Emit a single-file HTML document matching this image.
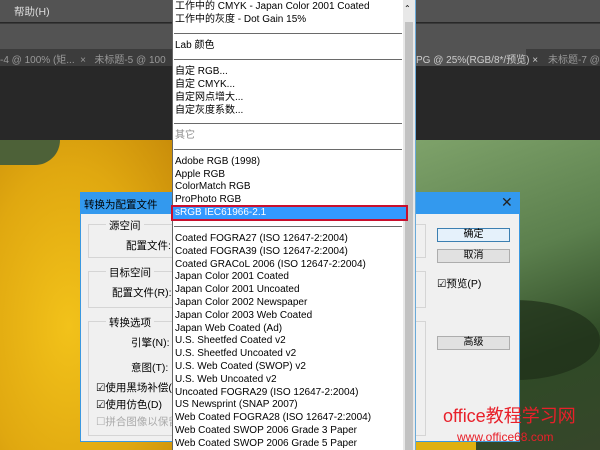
<!DOCTYPE html><html><head><meta charset="utf-8"><style>
*{margin:0;padding:0;box-sizing:border-box}
body{width:600px;height:450px;overflow:hidden;position:relative;background:#282828;font-family:"Liberation Sans","Noto Sans CJK SC",sans-serif;font-size:10px}
.a{position:absolute}
.it{position:absolute;left:175px;font-size:10px;color:#000;white-space:nowrap;line-height:12px}
.sep{position:absolute;left:174px;width:228px;height:1px;background:#6a6a6a}
.btn{position:absolute;left:437px;width:73px;height:14px;background:#e1e1e1;border:1px solid #adadad;text-align:center;font-size:10px;line-height:12px}
.gb{position:absolute;left:88px;width:338px;border:1px solid #d5d5d5}
.lb{position:absolute;font-size:10.5px;color:#000;white-space:nowrap}
</style></head><body>
<div class="a" style="left:0;top:0;width:600px;height:22px;background:#535353"></div>
<div class="a" style="left:14px;top:4px;color:#ddd;font-size:10.5px">帮助(H)</div>
<div class="a" style="left:0;top:23px;width:600px;height:26px;background:#535353;border-top:1px solid #3a3a3a"></div>
<div class="a" style="left:0;top:49px;width:600px;height:17px;background:#3c3c3c"></div>
<div class="a" style="left:0;top:51px;color:#999;font-size:10px">-4 @ 100% (矩...&nbsp;&nbsp;×&nbsp;&nbsp;&nbsp;未标题-5 @ 100</div>
<div class="a" style="left:416px;top:49px;width:110px;height:17px;background:#535353"></div>
<div class="a" style="left:416px;top:51px;color:#ccc;font-size:10px">PG @ 25%(RGB/8*/预览) ×</div>
<div class="a" style="left:548px;top:51px;color:#999;font-size:10px">未标题-7 @</div>
<div class="a" style="left:0;top:140px;width:172px;height:310px;background:radial-gradient(ellipse at 40% 60%,#f2c21a,#e0a810 60%,#c98d0a)"></div>
<div class="a" style="left:0;top:140px;width:60px;height:25px;background:#4d6138;border-radius:0 0 40px 0"></div>
<div class="a" style="left:416px;top:140px;width:184px;height:310px;background:linear-gradient(160deg,#7ea26a,#5b7f4d 40%,#2f4a26 70%,#36462a)"></div>
<div class="a" style="left:430px;top:300px;width:170px;height:80px;background:#1e2e18;border-radius:50%;opacity:.7"></div>
<div class="a" style="left:416px;top:440px;width:60px;height:10px;background:#e0b010"></div>
<!-- dialog -->
<div class="a" style="left:80px;top:192px;width:440px;height:250px;background:#f0f0f0;border:1px solid #3b98e0"></div>
<div class="a" style="left:80px;top:192px;width:440px;height:22px;background:#3399ee"></div>
<div class="a" style="left:84px;top:197px;font-size:10.5px">转换为配置文件</div>
<div class="a" style="left:501px;top:194px;font-size:14px;color:#222">✕</div>
<div class="gb" style="top:224px;height:34px"></div><div class="lb" style="left:106px;top:218px;background:#f0f0f0;padding:0 3px">源空间</div>
<div class="lb" style="left:126px;top:238px">配置文件:</div>
<div class="gb" style="top:271px;height:37px"></div><div class="lb" style="left:106px;top:265px;background:#f0f0f0;padding:0 3px">目标空间</div>
<div class="lb" style="left:112px;top:285px">配置文件(R):</div>
<div class="gb" style="top:321px;height:115px"></div><div class="lb" style="left:106px;top:315px;background:#f0f0f0;padding:0 3px">转换选项</div>
<div class="lb" style="left:131px;top:335px">引擎(N):</div>
<div class="lb" style="left:131px;top:360px">意图(T):</div>
<div class="lb" style="left:96px;top:380px">☑使用黑场补偿(</div>
<div class="lb" style="left:96px;top:397px">☑使用仿色(D)</div>
<div class="lb" style="left:96px;top:414px;color:#aaa">☐拼合图像以保留</div>
<div class="btn" style="top:228px;border:1px solid #3c7fb1;background:#e5f1fb">确定</div>
<div class="btn" style="top:249px">取消</div>
<div class="lb" style="left:437px;top:276px">☑预览(P)</div>
<div class="btn" style="top:336px">高级</div>
<!-- dropdown -->
<div class="a" style="left:172px;top:0;width:244px;height:450px;background:#fff;border-left:1px solid #666;border-right:2px solid #6aaad8"></div>
<div class="a" style="left:403px;top:0;width:12px;height:450px;background:#e8e8e8"></div>
<div class="a" style="left:405px;top:22px;width:8px;height:428px;background:#c2c2c2"></div>
<div class="a" style="left:404px;top:4px;font-size:8px">⌃</div>
<div class="it" style="top:1px">工作中的 CMYK - Japan Color 2001 Coated</div>
<div class="it" style="top:14px">工作中的灰度 - Dot Gain 15%</div>
<div class="sep" style="top:33px"></div>
<div class="it" style="top:40px">Lab 颜色</div>
<div class="sep" style="top:59px"></div>
<div class="it" style="top:66px">自定 RGB...</div>
<div class="it" style="top:79px">自定 CMYK...</div>
<div class="it" style="top:92px">自定网点增大...</div>
<div class="it" style="top:105px">自定灰度系数...</div>
<div class="sep" style="top:123px"></div>
<div class="it" style="top:130px;color:#888">其它</div>
<div class="sep" style="top:149px"></div>
<div class="it" style="top:156px">Adobe RGB (1998)</div>
<div class="it" style="top:169px">Apple RGB</div>
<div class="it" style="top:181px">ColorMatch RGB</div>
<div class="it" style="top:194px">ProPhoto RGB</div>
<div class="a" style="left:171px;top:205px;width:237px;height:16px;border:2px solid #c8102e;background:#3399ff"></div>
<div class="it" style="top:207px;color:#fff">sRGB IEC61966-2.1</div>
<div class="sep" style="top:226px"></div>
<div class="it" style="top:233px">Coated FOGRA27 (ISO 12647-2:2004)</div>
<div class="it" style="top:246px">Coated FOGRA39 (ISO 12647-2:2004)</div>
<div class="it" style="top:259px">Coated GRACoL 2006 (ISO 12647-2:2004)</div>
<div class="it" style="top:271px">Japan Color 2001 Coated</div>
<div class="it" style="top:284px">Japan Color 2001 Uncoated</div>
<div class="it" style="top:297px">Japan Color 2002 Newspaper</div>
<div class="it" style="top:310px">Japan Color 2003 Web Coated</div>
<div class="it" style="top:323px">Japan Web Coated (Ad)</div>
<div class="it" style="top:335px">U.S. Sheetfed Coated v2</div>
<div class="it" style="top:348px">U.S. Sheetfed Uncoated v2</div>
<div class="it" style="top:361px">U.S. Web Coated (SWOP) v2</div>
<div class="it" style="top:374px">U.S. Web Uncoated v2</div>
<div class="it" style="top:387px">Uncoated FOGRA29 (ISO 12647-2:2004)</div>
<div class="it" style="top:399px">US Newsprint (SNAP 2007)</div>
<div class="it" style="top:412px">Web Coated FOGRA28 (ISO 12647-2:2004)</div>
<div class="it" style="top:425px">Web Coated SWOP 2006 Grade 3 Paper</div>
<div class="it" style="top:438px">Web Coated SWOP 2006 Grade 5 Paper</div>
<!-- watermark -->
<div class="a" style="left:443px;top:402px;color:#e8202a;font-size:18px;white-space:nowrap">office教程学习网</div>
<div class="a" style="left:457px;top:430px;color:#e8202a;font-size:12px;white-space:nowrap">www.office68.com</div>
</body></html>
